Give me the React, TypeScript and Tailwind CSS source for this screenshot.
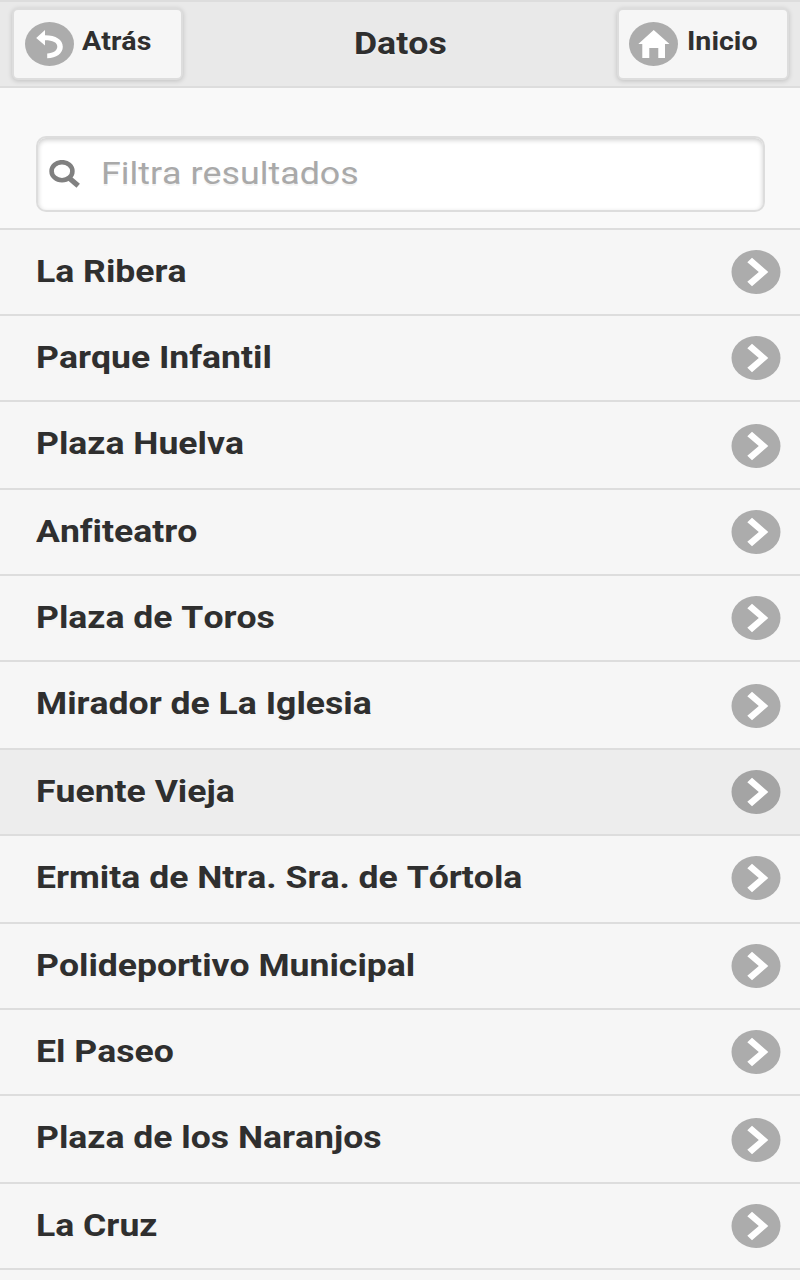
type Row = { name: string; height: string; icon: string; active?: boolean };

const rows: Row[] = [
  { name: "La Ribera", height: "h-[86px]", icon: "mt-5" },
  { name: "Parque Infantil", height: "h-[86px]", icon: "mt-5" },
  { name: "Plaza Huelva", height: "h-[88px]", icon: "mt-[22px]" },
  { name: "Anfiteatro", height: "h-[86px]", icon: "mt-5" },
  { name: "Plaza de Toros", height: "h-[86px]", icon: "mt-5" },
  { name: "Mirador de La Iglesia", height: "h-[88px]", icon: "mt-[22px]" },
  { name: "Fuente Vieja", height: "h-[86px]", icon: "mt-5", active: true },
  { name: "Ermita de Ntra. Sra. de Tórtola", height: "h-[88px]", icon: "mt-5" },
  { name: "Polideportivo Municipal", height: "h-[86px]", icon: "mt-5" },
  { name: "El Paseo", height: "h-[86px]", icon: "mt-5" },
  { name: "Plaza de los Naranjos", height: "h-[88px]", icon: "mt-[22px]" },
  { name: "La Cruz", height: "h-[86px]", icon: "mt-5" },
];

function Chevron({ dark }: { dark?: boolean }) {
  return (
    <svg className="block h-11 w-[50px]" viewBox="0 0 50 44">
      <ellipse cx="25" cy="22" rx="24.5" ry="22" fill={dark ? "#a4a4a4" : "#acacac"} />
      <path d="M21 7.800 37.300 22 21 36.200 16.300 31.800 27.800 22 16.300 12.200z" fill="#fff" />
    </svg>
  );
}

function BackIcon() {
  return (
    <svg className="block h-11 w-[49px]" viewBox="0 0 49 44">
      <ellipse cx="24.5" cy="22" rx="24.5" ry="22" fill="#acacac" />
      <path d="M11.200 16 20 8v5.300c11 0 17.800 4.500 17.800 11.500 0 6.800-6.300 11.200-15.600 11.400v-4.600c6-.4 10.100-3 10.100-6.800 0-4.300-4.300-6.500-12.300-6.500V23.500z" fill="#fff" />
    </svg>
  );
}

function HomeIcon() {
  return (
    <svg className="block h-11 w-[49px]" viewBox="0 0 49 44">
      <ellipse cx="24.5" cy="22" rx="24.5" ry="22" fill="#acacac" />
      <path d="M24.700 8 40.500 22H36v14h-6.700V26h-9v10h-7V22H9.300z" fill="#fff" />
    </svg>
  );
}

const button =
  "flex h-[72px] items-start rounded-md border-2 border-[#ddd] bg-[#f6f6f6] pt-3 shadow-[0_1px_5px_rgba(0,0,0,0.18)]";
const buttonText =
  "block origin-left scale-x-[1.1] text-[26px] leading-[30px] font-bold whitespace-nowrap";

export default function App() {
  return (
    <div className="h-[1280px] w-[800px] overflow-hidden bg-[#f9f9f9] font-['Roboto',sans-serif] text-[#2f2f2f] [font-kerning:none] [font-variant-ligatures:none] [text-shadow:0_2px_0_#f3f3f3]">
      <header className="flex h-[88px] justify-between border-y-2 border-[#ddd] bg-[#e9e9e9] pt-1.5 pr-[11px] pl-3">
        <button className={`${button} w-[171px] pl-[11px]`}>
          <BackIcon />
          <span className="mt-1 ml-2">
            <span className={buttonText}>Atrás</span>
          </span>
        </button>
        <h1 className="mt-[18px] scale-x-[1.15] text-[31px] leading-9 font-bold [text-shadow:0_2px_0_#eee]">
          Datos
        </h1>
        <button className={`${button} w-[172px] pl-[10px]`}>
          <HomeIcon />
          <span className="mt-1 ml-[9px]">
            <span className={buttonText}>Inicio</span>
          </span>
        </button>
      </header>

      <div className="h-[140px] px-9 pt-12">
        <div className="flex h-[76px] w-[729px] items-start rounded-[10px] border-2 border-[#ddd] bg-white pt-[21px] pl-[10px] shadow-[inset_0_2px_5px_rgba(0,0,0,0.2)]">
          <svg className="mt-px block h-[30px] w-[34px]" viewBox="0 0 34 30" fill="none" stroke="#808080">
            <ellipse cx="14" cy="11.200" rx="10.400" ry="9" strokeWidth="4.600" />
            <path d="M20.500 17.500 30.200 25.800" strokeWidth="5.200" />
          </svg>
          <span className="-mt-[3px] ml-[19px] origin-left scale-x-[1.155] text-[31px] leading-9 whitespace-nowrap text-[#a9a9a9]">
            Filtra resultados
          </span>
        </div>
      </div>

      <ul>
        {rows.map((row) => (
          <li
            key={row.name}
            className={`flex items-start justify-between border-t-2 border-[#ddd] pr-[19px] pl-9 ${row.height} ${
              row.active ? "bg-[#ededed]" : "bg-[#f6f6f6]"
            }`}
          >
            <span className="mt-6 origin-left scale-x-[1.147] text-[31px] leading-9 font-bold whitespace-nowrap">
              {row.name}
            </span>
            <span className={row.icon}>
              <Chevron dark={row.active} />
            </span>
          </li>
        ))}
        <li className="h-3 border-t-2 border-[#ddd] bg-[#f6f6f6]" />
      </ul>
    </div>
  );
}
